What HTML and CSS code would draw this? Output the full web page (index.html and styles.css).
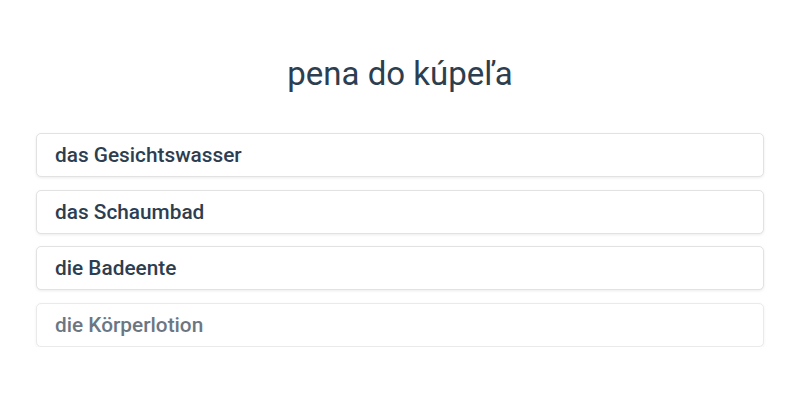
FILE: index.html
```html
<!DOCTYPE html>
<html>
<head>
<meta charset="utf-8">
<link rel="stylesheet" href="styles.css">
</head>
<body>
<div class="quiz">
  <h1 class="prompt">pena do kúpeľa</h1>
  <div class="options">
    <div class="option">das Gesichtswasser</div>
    <div class="option">das Schaumbad</div>
    <div class="option">die Badeente</div>
    <div class="option fading">die Körperlotion</div>
  </div>
</div>
</body>
</html>
```

FILE: styles.css
```css
html, body {
  margin: 0;
  padding: 0;
  background: #ffffff;
  font-family: Roboto, "Noto Sans", sans-serif;
  color: #2c3e50;
}
.quiz {
  width: 728px;
  margin: 0 auto;
  padding-top: 55px;
}
.prompt {
  margin: 0 0 40px;
  text-align: center;
  font-weight: 400;
  font-size: 33px;
  line-height: 38px;
  color: #2c3e50;
}
.options {
  display: flex;
  flex-direction: column;
  gap: 12.5px;
}
.option {
  box-sizing: border-box;
  height: 44px;
  display: flex;
  align-items: center;
  padding: 0 18px;
  border: 1px solid #e2e2e2;
  border-radius: 5px;
  box-shadow: 0 1px 3px rgba(0,0,0,0.08);
  font-size: 20.8px;
  font-weight: 500;
  background: #fff;
}
.fading {
  opacity: 0.7;
}
```
